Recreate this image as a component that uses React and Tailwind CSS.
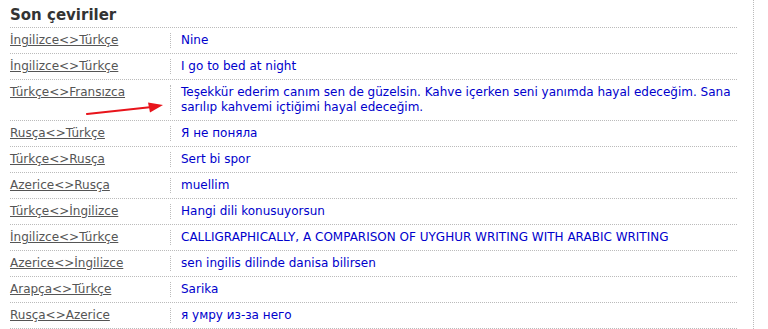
import React from 'react';

const translations = [
  { pair: 'İngilizce<>Türkçe', text: 'Nine' },
  { pair: 'İngilizce<>Türkçe', text: 'I go to bed at night' },
  {
    pair: 'Türkçe<>Fransızca',
    text: 'Teşekkür ederim canım sen de güzelsin. Kahve içerken seni yanımda hayal edeceğim. Sana sarılıp kahvemi içtiğimi hayal edeceğim.',
  },
  { pair: 'Rusça<>Türkçe', text: 'Я не поняла' },
  { pair: 'Türkçe<>Rusça', text: 'Sert bi spor' },
  { pair: 'Azerice<>Rusça', text: 'muellim' },
  { pair: 'Türkçe<>İngilizce', text: 'Hangi dili konusuyorsun' },
  { pair: 'İngilizce<>Türkçe', text: 'CALLIGRAPHICALLY, A COMPARISON OF UYGHUR WRITING WITH ARABIC WRITING' },
  { pair: 'Azerice<>İngilizce', text: 'sen ingilis dilinde danisa bilirsen' },
  { pair: 'Arapça<>Türkçe', text: 'Sarika' },
  { pair: 'Rusça<>Azerice', text: 'я умру из-за него' },
];

const Arrow = () => (
  <svg className="absolute left-[84px] top-[100px] pointer-events-none" width="84" height="18" viewBox="0 0 84 18">
    <path d="M3 14 L68 7" stroke="#e8141b" strokeWidth="2.2" strokeLinecap="round" fill="none" />
    <path d="M64 2.5 L79 5 L66 12.5 Z" fill="#e8141b" />
  </svg>
);

const App = () => {
  return (
    <div className="bg-white min-h-screen" style={{ fontFamily: '"DejaVu Sans", Verdana, sans-serif' }}>
      <div className="relative w-[754px] h-[329px] overflow-hidden border-r border-dotted border-[#bbb] pl-[10px] pr-[16px]">
        <h2 className="text-[15px] font-bold leading-[18px] text-[#333] pt-[6px] pb-[3px] border-b border-dotted border-[#bbb]">
          Son çeviriler
        </h2>

        {translations.map((t, i) => (
          <div key={i} className="flex py-[5px] border-b border-dotted border-[#bbb] text-[12px] leading-[15px]">
            <div className="w-[160px] shrink-0">
              <a href="#" className="text-[#555] underline">{t.pair}</a>
            </div>
            <div className="flex-1 border-l border-dotted border-[#bbb] pl-[10px] text-[#0000cc]">
              {t.text}
            </div>
          </div>
        ))}

        <Arrow />
      </div>
    </div>
  );
};

export default App;
